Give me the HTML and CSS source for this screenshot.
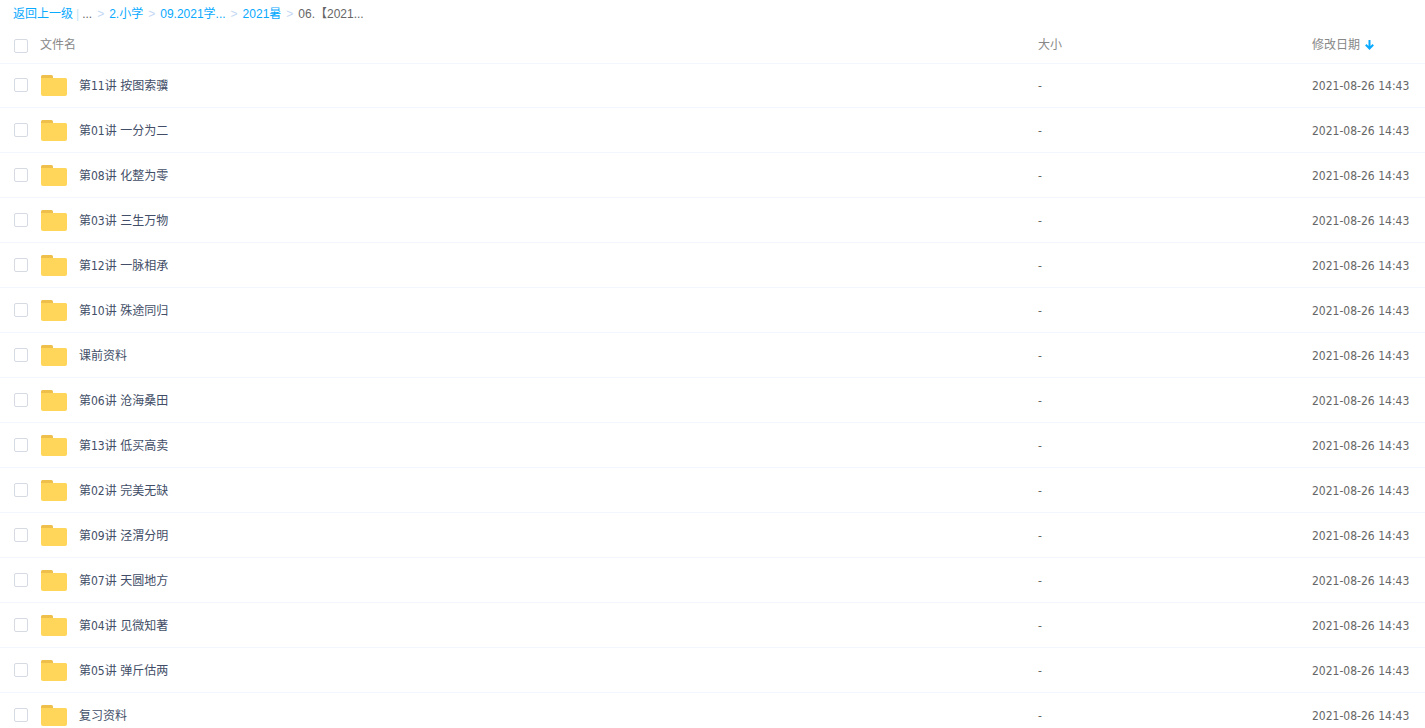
FILE: index.html
```html
<!DOCTYPE html>
<html lang="zh-CN">
<head>
<meta charset="utf-8">
<title>06.【2021...</title>
<link rel="stylesheet" href="styles.css">
</head>
<body>
<svg class="sprite" aria-hidden="true">
  <symbol id="folder" viewBox="0 0 26 21">
    <path fill="#eebf4b" d="M0 6V1.500Q0 0 1.500 0H10.500Q12 0 12 1.500V6Z"/>
    <path fill="#ffd659" d="M0 3H24.500Q26 3 26 4.500V19Q26 21 24 21H2Q0 21 0 19Z"/>
  </symbol>
</svg>
<main class="page">
  <nav class="crumbs" aria-label="路径">
    <a class="back" href="#">返回上一级</a><span class="bar">|</span><span class="dots">...</span><span class="sep">&gt;</span><a href="#">2.小学</a><span class="sep">&gt;</span><a href="#">09.2021学...</a><span class="sep">&gt;</span><a href="#">2021暑</a><span class="sep">&gt;</span><span>06.【2021...</span>
  </nav>
  <table class="files">
    <colgroup><col class="col-check"><col class="col-name"><col class="col-size"><col class="col-date"></colgroup>
    <thead>
      <tr><th class="check"><input type="checkbox" aria-label="全选"></th><th>文件名</th><th>大小</th><th><span class="sort">修改日期<svg width="9" height="10" viewBox="0 0 9 10" fill="none" stroke="#09aaff" stroke-width="2" aria-hidden="true"><path d="M4.500 0V8M0.800 4.800L4.500 8.500L8.200 4.800"/></svg></span></th></tr>
    </thead>
    <tbody id="rows"></tbody>
  </table>
</main>
<script src="files.js"></script>
</body>
</html>
```
FILE: styles.css
```css
* { box-sizing: border-box; }
body {
  margin: 0;
  background: #fff;
  color: #424e67;
  font: 12px/16px "DejaVu Sans Condensed", "Noto Sans CJK SC", sans-serif;
}
a { color: inherit; text-decoration: none; }
.sprite { position: absolute; width: 0; height: 0; }
.page { height: 100vh; overflow: hidden; }

.crumbs {
  display: flex;
  align-items: center;
  height: 28px;
  padding-left: 13px;
  color: #666;
  font-family: "Liberation Sans", "Noto Sans CJK SC", sans-serif;
  white-space: nowrap;
}
.crumbs a { color: #09aaff; }
.bar { margin: 0 3px; color: #c4e4f6; }
.sep { margin: 0 5px; color: #c4d8f4; }

.files {
  width: 100%;
  border-collapse: separate;
  border-spacing: 0;
  table-layout: fixed;
}
.col-check { width: 40px; }
.col-size { width: 274px; }
.col-date { width: 113px; }
.files th, .files td {
  height: 45px;
  padding: 0;
  border-bottom: 1px solid #f2f6fd;
  text-align: left;
  vertical-align: middle;
  white-space: nowrap;
}
.files th {
  height: 36px;
  padding-bottom: 2px;
  color: #888;
  font-weight: 400;
}
.files th.check { padding-bottom: 0; }
.files tbody tr:first-child td { height: 44px; }
.files td { color: #666; }
.files td.meta { padding-top: 1px; }
.files .check { padding-left: 14px; }
.files tbody tr:first-child .check { padding-bottom: 1px; }
.check input {
  display: block;
  appearance: none;
  width: 14px;
  height: 14px;
  margin: 0;
  border: 1px solid #d5dae3;
  border-radius: 2px;
  background: #fff;
}
.check input:checked { background: #09aaff; }
.name {
  display: flex;
  align-items: center;
  gap: 12px;
  padding-left: 1px;
  color: #424e67;
}
.name svg { width: 26px; height: 21px; }
.name span { padding-top: 1px; }
.sort { display: flex; align-items: center; gap: 5px; }
```
FILE: files.js
```js
const names = [
  "第11讲 按图索骥", "第01讲 一分为二", "第08讲 化整为零", "第03讲 三生万物",
  "第12讲 一脉相承", "第10讲 殊途同归", "课前资料", "第06讲 沧海桑田",
  "第13讲 低买高卖", "第02讲 完美无缺", "第09讲 泾渭分明", "第07讲 天圆地方",
  "第04讲 见微知著", "第05讲 弹斤估两", "复习资料"
];
document.getElementById("rows").innerHTML = names.map(name => `
  <tr>
    <td class="check"><input type="checkbox" aria-label="${name}"></td>
    <td><a class="name" href="#"><svg aria-hidden="true"><use href="#folder"/></svg><span>${name}</span></a></td>
    <td class="meta">-</td>
    <td class="meta">2021-08-26 14:43</td>
  </tr>`).join("");
```
